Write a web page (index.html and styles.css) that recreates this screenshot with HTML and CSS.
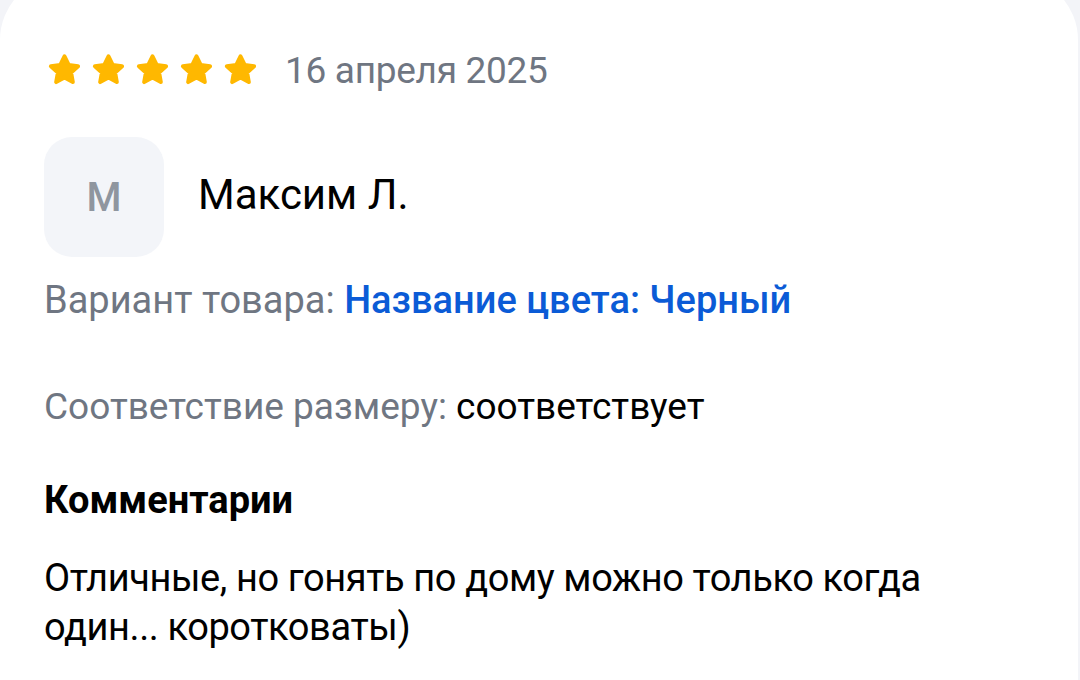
FILE: index.html
```html
<!DOCTYPE html>
<html lang="ru">
<head>
<meta charset="utf-8">
<link rel="stylesheet" href="styles.css">
</head>
<body>
<div class="card">
  <div class="top">
    <div class="stars">
      <svg class="star" viewBox="0 0 24 24"><path d="M12 2.8l2.7 5.6 6.1.8-4.5 4.2 1.1 6.1L12 16.6l-5.4 2.9 1.1-6.1-4.5-4.2 6.1-.8z"/></svg>
      <svg class="star" viewBox="0 0 24 24"><path d="M12 2.8l2.7 5.6 6.1.8-4.5 4.2 1.1 6.1L12 16.6l-5.4 2.9 1.1-6.1-4.5-4.2 6.1-.8z"/></svg>
      <svg class="star" viewBox="0 0 24 24"><path d="M12 2.8l2.7 5.6 6.1.8-4.5 4.2 1.1 6.1L12 16.6l-5.4 2.9 1.1-6.1-4.5-4.2 6.1-.8z"/></svg>
      <svg class="star" viewBox="0 0 24 24"><path d="M12 2.8l2.7 5.6 6.1.8-4.5 4.2 1.1 6.1L12 16.6l-5.4 2.9 1.1-6.1-4.5-4.2 6.1-.8z"/></svg>
      <svg class="star" viewBox="0 0 24 24"><path d="M12 2.8l2.7 5.6 6.1.8-4.5 4.2 1.1 6.1L12 16.6l-5.4 2.9 1.1-6.1-4.5-4.2 6.1-.8z"/></svg>
    </div>
    <span class="date">16 апреля 2025</span>
  </div>
  <div class="author">
    <div class="avatar">М</div>
    <div class="name">Максим Л.</div>
  </div>
  <p class="row row-variant"><span class="label">Вариант товара:</span> <span class="link">Название цвета: Черный</span></p>
  <p class="row row-size"><span class="label">Соответствие размеру:</span> <span class="value">соответствует</span></p>
  <h3 class="heading">Комментарии</h3>
  <p class="comment">Отличные, но гонять по дому можно только когда один... коротковаты)</p>
</div>
</body>
</html>
```
FILE: styles.css
```css
html, body {
  margin: 0;
  padding: 0;
  background: #f3f4f8;
  height: 100%;
  overflow: hidden;
}
body {
  font-family: Roboto, "Noto Sans", sans-serif;
  color: #000;
}
.card {
  background: #fff;
  width: 1078px;
  height: 704px;
  margin-top: -24px;
  border-radius: 64px 64px 0 0;
  box-sizing: border-box;
  padding: 72px 0 0 44px;
}
.top {
  display: flex;
  align-items: center;
  height: 44px;
}
.stars {
  display: flex;
  gap: 7px;
  margin-left: 2px;
}
.star {
  width: 37px;
  height: 37px;
}
.star path {
  fill: #ffb800;
  stroke: #ffb800;
  stroke-width: 2.6;
  stroke-linejoin: round;
}
.date {
  margin-left: 26px;
  font-size: 37px;
  color: #6f7682;
  letter-spacing: -0.3px;
}
.author {
  display: flex;
  align-items: center;
  margin-top: 45px;
}
.avatar {
  width: 120px;
  height: 120px;
  border-radius: 28px;
  background: #f3f5f9;
  color: #8f969f;
  font-size: 40px;
  font-weight: 500;
  display: flex;
  align-items: center;
  justify-content: center;
}
.name {
  margin-left: 34px;
  font-size: 42px;
  margin-top: -6px;
}
.row {
  margin: 0;
  font-size: 38px;
  line-height: 44px;
}
.row-variant {
  margin-top: 21px;
}
.row-size {
  margin-top: 63px;
  font-size: 37px;
}
.label {
  color: #6f7682;
}
.link {
  color: #0b5bd6;
  font-weight: 500;
}
.value {
  color: #000;
}
.heading {
  margin: 49px 0 0;
  font-size: 38px;
  font-weight: 700;
  line-height: 44px;
}
.comment {
  margin: 32px 0 0;
  font-size: 38px;
  letter-spacing: -0.4px;
  line-height: 49px;
  width: 910px;
}
```
